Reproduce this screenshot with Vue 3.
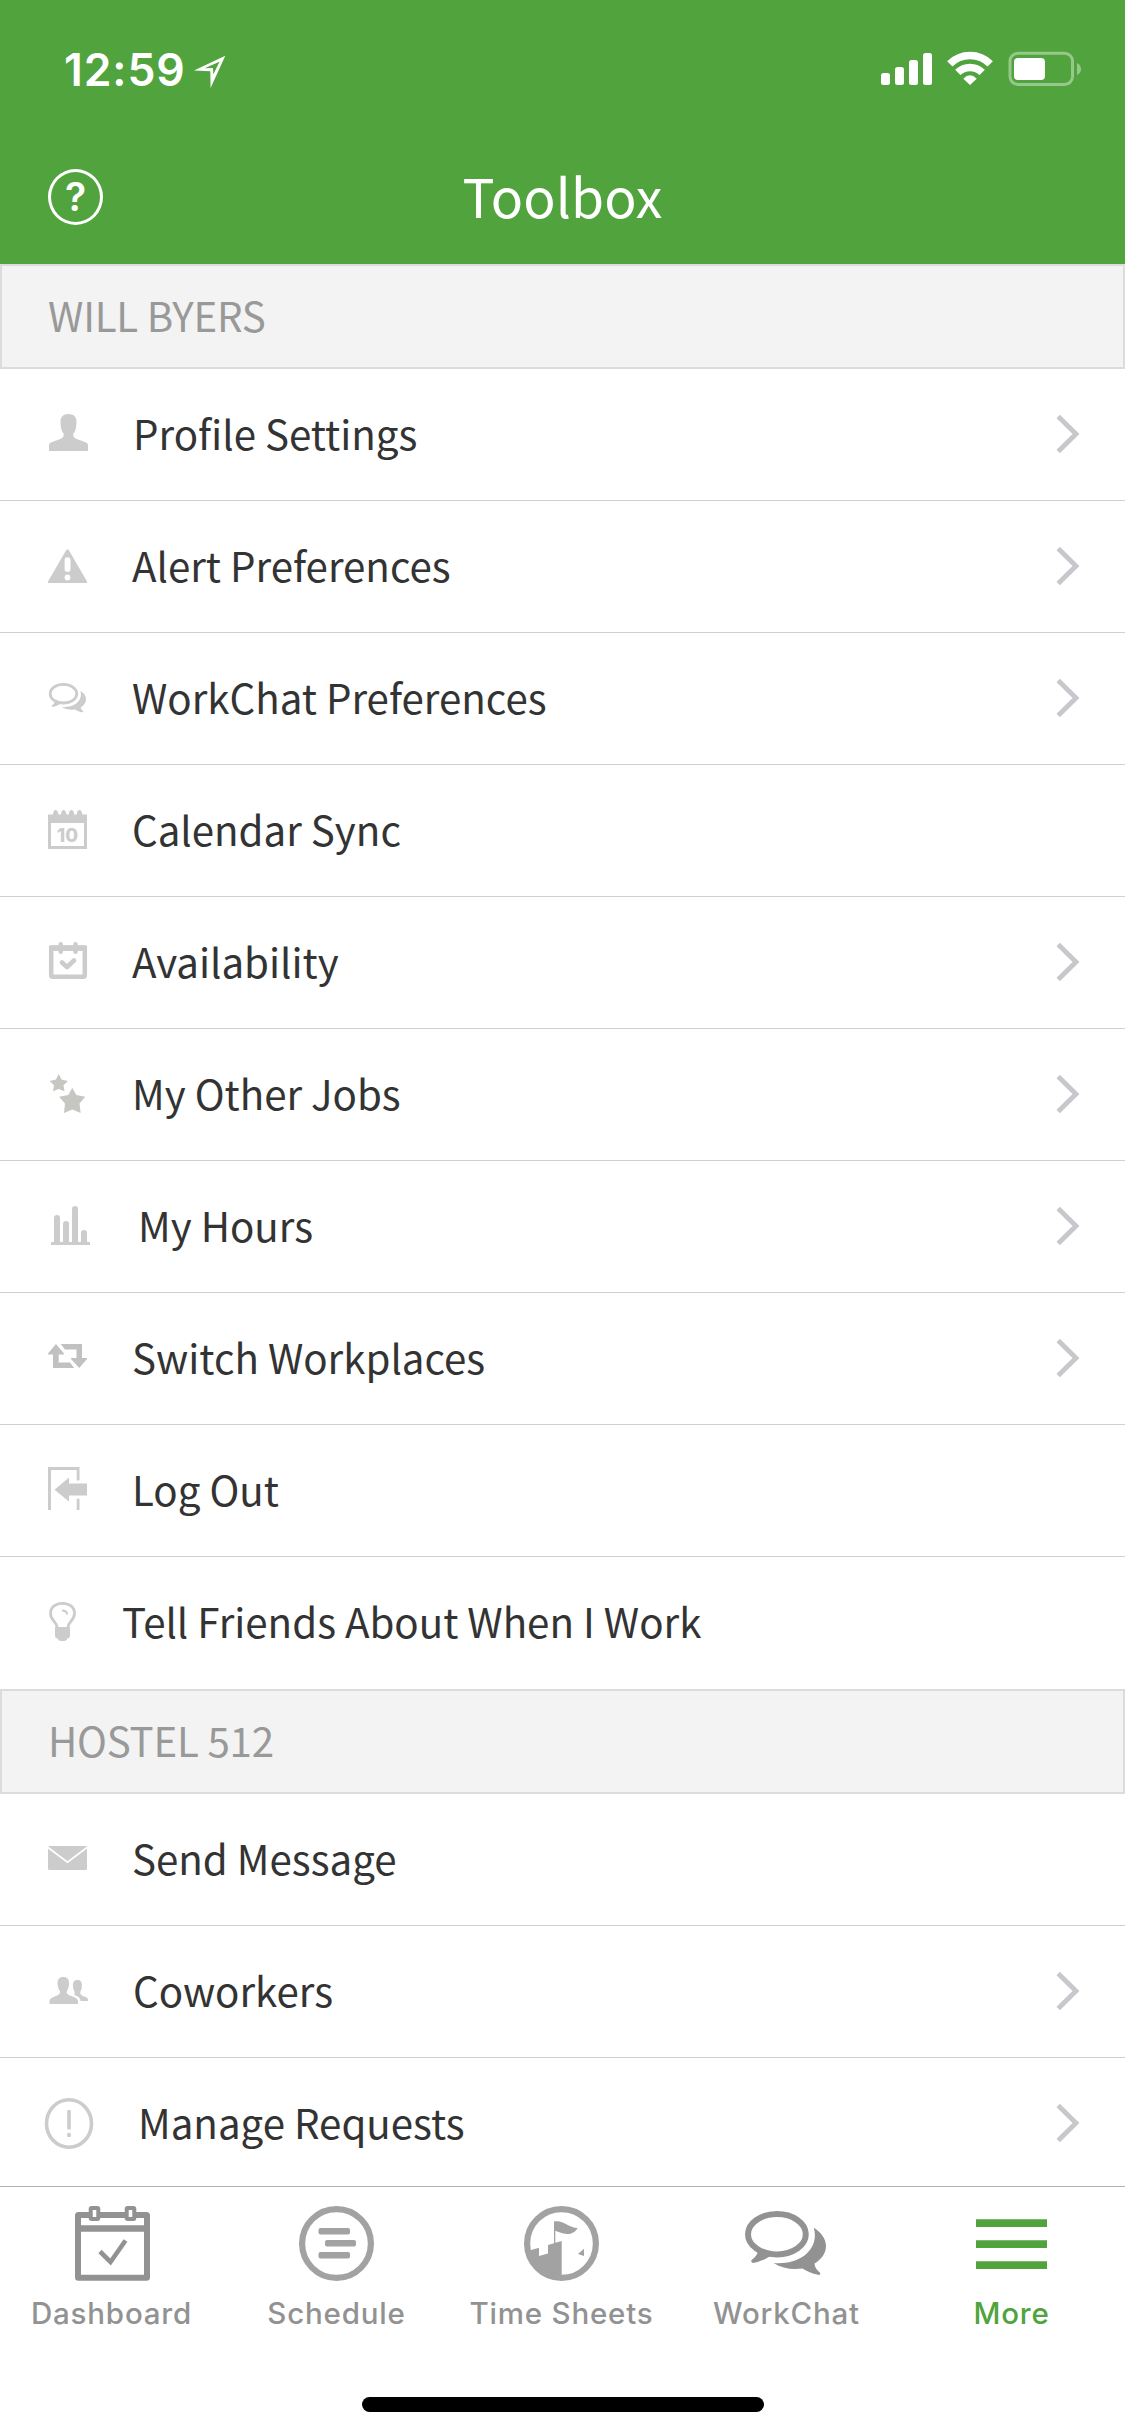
<script setup>
const sections = [
  {
    title: 'WILL BYERS',
    rows: [
      { icon: 'person', label: 'Profile Settings', indent: 133, more: true },
      { icon: 'alert', label: 'Alert Preferences', indent: 132, more: true },
      { icon: 'chat', label: 'WorkChat Preferences', indent: 132, more: true },
      { icon: 'calendar', label: 'Calendar Sync', indent: 132, more: false },
      { icon: 'availability', label: 'Availability', indent: 132, more: true },
      { icon: 'stars', label: 'My Other Jobs', indent: 132, more: true },
      { icon: 'bars', label: 'My Hours', indent: 138, more: true },
      { icon: 'switch', label: 'Switch Workplaces', indent: 132, more: true },
      { icon: 'logout', label: 'Log Out', indent: 132, more: false },
      { icon: 'bulb', label: 'Tell Friends About When I Work', indent: 122, more: false },
    ],
  },
  {
    title: 'HOSTEL 512',
    rows: [
      { icon: 'mail', label: 'Send Message', indent: 132, more: false },
      { icon: 'coworkers', label: 'Coworkers', indent: 133, more: true },
      { icon: 'requests', label: 'Manage Requests', indent: 138, more: true },
    ],
  },
]

const tabs = [
  { id: 'dashboard', label: 'Dashboard' },
  { id: 'schedule', label: 'Schedule' },
  { id: 'timesheets', label: 'Time Sheets' },
  { id: 'workchat', label: 'WorkChat' },
  { id: 'more', label: 'More', active: true },
]
</script>

<template>
  <div class="screen">
    <svg class="defs" width="0" height="0" aria-hidden="true">
      <symbol id="bubbles" viewBox="0 0 81 64">
        <ellipse cx="31.9" cy="23.2" rx="28.9" ry="20.2" fill="none" stroke="currentColor" stroke-width="6" />
        <path d="M12 39C13.4 41.500 12.500 44.500 6.500 49.200Q5.500 51.500 8 52Q17 50.500 24.500 45.500L19.500 38Z" fill="currentColor" />
        <path d="M68.800 16.700C76 21 81 28 81 35C81 42 76.500 48.500 69.500 52.500C69.800 57 72.500 59.500 75.300 62Q75.500 64.300 73 63.800C67 62.500 62 60.500 57.500 57.500C47 58.800 37 57.500 28.500 52C40 53 51.500 50.500 59.500 44.500C68 38 72 28 68.800 16.700Z" fill="currentColor" />
      </symbol>
    </svg>

    <header class="top">
      <div class="status">
        <span class="time">12:59</span>
        <svg class="locate" width="32" height="34" viewBox="194 55 32 34">
          <path fill="#fff" fill-rule="evenodd" d="M194 70.500L225.300 55.800L210.600 88L210.300 71.200ZM204.500 68.300L213 68L213.300 74.500L219.500 61.800Z" />
        </svg>
        <svg class="meters" width="204" height="40" viewBox="880 50 204 40">
          <g fill="#fff">
            <rect x="881" y="73" width="9" height="12" rx="2.500" />
            <rect x="895" y="67" width="9" height="18" rx="2.500" />
            <rect x="909" y="60" width="9" height="25" rx="2.500" />
            <rect x="923" y="53" width="9" height="32" rx="2.500" />
            <path d="M970 85L963.300 78.700Q970 72 976.700 78.700Z" />
            <rect x="1014" y="58" width="31" height="22" rx="4" />
          </g>
          <g fill="none" stroke="#fff" stroke-width="7.500">
            <path d="M949.800 63.800A28.500 28.500 0 0 1 990.200 63.800" />
            <path d="M957.800 72.400A17.500 17.500 0 0 1 982.200 72.400" />
          </g>
          <g opacity=".4">
            <rect x="1010" y="53.200" width="62.500" height="31.300" rx="8" fill="none" stroke="#fff" stroke-width="3" />
            <path d="M1077 63Q1081 65 1081 69T1077 75Z" fill="#fff" />
          </g>
        </svg>
      </div>
      <div class="nav">
        <span class="help">?</span>
        <h1 class="title">Toolbox</h1>
      </div>
    </header>

    <main class="list">
      <section v-for="section in sections" :key="section.title">
        <h2 class="section-title">{{ section.title }}</h2>
        <div v-for="row in section.rows" :key="row.icon" class="row">
          <svg class="icon" :style="{ width: row.indent + 'px' }" height="131" :viewBox="`0 0 ${row.indent} 131`">
            <g v-if="row.icon === 'person'">
              <path d="M68.500 45C74 45 76.800 48 76.500 53.500C76.200 59 75.500 62.500 73.300 64.800C73 68 74.500 69.300 78 70.600C83 72.500 88 73.500 88 76V82H49V76C49 73.500 54 72.500 59 70.600C62.500 69.300 64 68 63.700 64.800C61.500 62.500 60.800 59 60.500 53.500C60.200 48 63 45 68.500 45Z" />
            </g>
            <g v-else-if="row.icon === 'alert'">
              <path d="M66 49.500Q67.500 47 69 49.500L87 80.500V82H48V80.500Z" />
              <rect x="64.600" y="56.300" width="5.900" height="14.500" rx="2.900" fill="#fff" />
              <circle cx="67.500" cy="76.500" r="2.900" fill="#fff" />
            </g>
            <use v-else-if="row.icon === 'chat'" href="#bubbles" x="48.700" y="50" width="37.400" height="29.500" />
            <g v-else-if="row.icon === 'calendar'">
              <path fill-rule="evenodd" d="M48 49.500H53Q53.200 45 55.500 45T58.500 49.500H61Q61.200 45 63.500 45T66.500 49.500H68.800Q69 45 71.400 45T74.300 49.500H76.800Q77 45 79.400 45T82.300 49.500H87V84H48ZM51 58V81H84V58Z" />
              <text class="day" x="67.600" y="76.700" text-anchor="middle">10</text>
            </g>
            <g v-else-if="row.icon === 'availability'">
              <rect x="51.200" y="50.500" width="33.600" height="29.300" rx="1.500" fill="none" stroke="#ccc" stroke-width="4.500" />
              <path d="M49 48.500H87V54H49Z" />
              <path d="M60.700 47.200V54.700M75.500 47.200V54.700" class="thick" />
              <path d="M62 65.500L67 70L74 63.500" class="thick" />
            </g>
            <g v-else-if="row.icon === 'stars'" fill="#c7c7c2">
              <path d="M58.700 45L61.500 50.500L68 52L63.500 56.300L64.500 62.300L58.700 60L53 62.300L54 56.300L49.700 52L56 50.500Z" />
              <path d="M72.300 58.700L76.300 66L85.300 67.800L79.500 74.500L80.700 84L72.300 80.500L64 84L65 74.500L59 67.800L68.300 66Z" />
            </g>
            <path v-else-if="row.icon === 'bars'" d="M51 81H54V57Q54 54 57 54T60 57V81H63V63Q63 60 66 60T69 63V81H72V48Q72 45 75 45T78 48V81H81V72Q81 69 84 69T87 72V81H90V84H51Z" />
            <g v-else-if="row.icon === 'switch'" fill="#c1c1c1">
              <path d="M56 51L64 60.500V61.500H58.700V69.500H70L74.200 75H53V61.500H48V60.500Z" />
              <path d="M60.700 51H82V65H87V66L79.200 75L71 66V65H76.500V56.500H65Z" />
            </g>
            <path v-else-if="row.icon === 'logout'" d="M48 42H79.500V55.500H76.700V45H51V85H48ZM76.700 73.700H79.500V85H76.700ZM54.500 64.700L69 52.500V58.500H87V70.500H69V76.500Z" />
            <g v-else-if="row.icon === 'bulb'">
              <path d="M57 70C57 65 50.500 63.500 50.500 56.500C50.500 50 56 46.300 62.500 46.300S74.500 50 74.500 56.500C74.500 63.500 68 65 68 70" fill="none" stroke="#ccc" stroke-width="2.800" />
              <path d="M62 53.500Q67 53.500 67.200 57.500" fill="none" stroke="#ccc" stroke-width="2" />
              <path d="M55 70H70V79Q70 81 67.500 81.500Q66.500 84 64 84H61Q58.500 84 57.500 81.500Q55 81 55 79Z" />
            </g>
            <g v-else-if="row.icon === 'mail'">
              <rect x="48" y="52" width="39" height="24" rx="1.500" />
              <path d="M48 53.500L67.500 68.200L87 53.500" fill="none" stroke="#fff" stroke-width="1.800" />
            </g>
            <g v-else-if="row.icon === 'coworkers'">
              <path d="M63.200 51C67.500 51 69.200 53.500 69 57.500C68.800 61 68.200 63.500 66.700 65.200C66.500 67.700 67.700 68.800 70.500 69.800C75 71.500 78 72.500 78 75.500V78H49.500V75.500C49.500 72.500 52.500 71.500 56.500 69.800C59 68.800 60.200 67.700 60 65.200C58.500 63.500 57.800 61 57.600 57.500C57.400 53.500 59 51 63.200 51Z" />
              <path d="M77.500 54C80.700 54 82 56 81.900 59.500C81.800 62.500 81.300 64.200 80.200 65.800C80 68 81 69.300 83.500 70.200C86.500 71.200 88 71.800 88 73.500V75H80.500C80.500 71.500 77 70 74 68.800Q75.300 67.500 74.500 65.500C73.300 63.500 73 62 72.900 59.500C72.800 56 74.300 54 77.500 54Z" />
            </g>
            <g v-else>
              <ellipse cx="69" cy="65.500" rx="22.500" ry="23.700" fill="none" stroke="#ccc" stroke-width="3.600" />
              <rect x="67.200" y="52" width="3.600" height="19.500" rx="1" />
              <rect x="67.200" y="75" width="3.600" height="4" rx="1" />
            </g>
          </svg>
          <span class="label">{{ row.label }}</span>
          <svg v-if="row.more" class="chevron" width="26" height="42" viewBox="0 0 26 42">
            <path d="M3.200 3.500L21 21L3.200 38.500" fill="none" stroke="#c7c7cc" stroke-width="4.800" />
          </svg>
        </div>
      </section>
    </main>

    <nav class="tabs">
      <div class="tab-row">
        <div v-for="tab in tabs" :key="tab.id" class="tab" :class="{ active: tab.active }">
          <svg width="225" height="102" viewBox="0 0 225 102">
            <g v-if="tab.id === 'dashboard'" fill="none" stroke="#929292">
              <rect x="78" y="28" width="69" height="62.700" rx=".5" stroke-width="6" />
              <path d="M78 41.500H147" stroke-width="6.300" />
              <g fill="#fff" stroke-width="4">
                <rect x="90.700" y="21" width="7.600" height="11" rx="1" />
                <rect x="126.700" y="21" width="7.600" height="11" rx="1" />
              </g>
              <path d="M100 64.500L110.500 75L125.500 53.500" stroke-width="4.600" />
            </g>
            <g v-else-if="tab.id === 'schedule'" fill="#a2a2a2">
              <circle cx="111.500" cy="56.500" r="34.400" fill="none" stroke="#a2a2a2" stroke-width="6.200" />
              <rect x="93.500" y="41" width="31.500" height="6.500" rx="2" />
              <rect x="100" y="53" width="31" height="6.500" rx="2" />
              <rect x="93.500" y="65" width="31.500" height="6.500" rx="2" />
            </g>
            <g v-else-if="tab.id === 'timesheets'" fill="#a2a2a2">
              <circle cx="111.500" cy="56.500" r="34.400" fill="none" stroke="#a2a2a2" stroke-width="6.200" />
              <path d="M78.500 63.700L89 60.700V69L98 66.500V58L104 56.200V34.500C113 32.500 118 40.500 127.700 41C123 49 115 48 105.300 43.800V55.800L111.700 54V91H105C90 90 78 78 78.500 63.700Z" />
              <path d="M134 61.700V69L128 67Z" />
            </g>
            <g v-else-if="tab.id === 'workchat'" class="chat-tab">
              <use href="#bubbles" x="70" y="24" width="81" height="64" />
            </g>
            <path v-else fill="#51a33d" d="M76 32.300H147V40H76ZM76 53.300H147V61H76ZM76 74.300H147V82H76Z" />
          </svg>
          <span class="tab-label">{{ tab.label }}</span>
        </div>
      </div>
      <div class="home"></div>
    </nav>
  </div>
</template>

<style>
body {
  margin: 0;
  background: #fff;
}
</style>

<style scoped>
.screen {
  display: flex;
  flex-direction: column;
  width: 1125px;
  height: 2436px;
  overflow: hidden;
  background: #fff;
  font-family: "Noto Sans CJK SC", "Noto Sans", sans-serif;
}
.defs {
  position: absolute;
}
.top {
  flex: none;
  height: 264px;
  background: #51a33d;
  color: #fff;
}
.status {
  display: flex;
  height: 132px;
  box-sizing: border-box;
  padding: 50px 41px 0 64px;
}
.time {
  width: 130px;
  font: 600 44.500px/40px Inter, sans-serif;
  letter-spacing: 0.900px;
}
.locate {
  margin-top: 5px;
}
.meters {
  margin-left: auto;
}
.nav {
  display: grid;
  grid-template-columns: 1fr auto 1fr;
  align-items: center;
  height: 130px;
  padding: 0 48px;
}
.help {
  display: flex;
  align-items: center;
  justify-content: center;
  box-sizing: border-box;
  width: 55px;
  height: 56px;
  border: 3px solid #fff;
  border-radius: 50%;
  font: 600 39px/50px Inter, sans-serif;
}
.title {
  margin: 0;
  padding-bottom: 4px;
  font-size: 53.500px;
  font-weight: 400;
  line-height: 126px;
  letter-spacing: 0.100px;
}
.list {
  height: 1922px;
  overflow: hidden;
}
.section-title {
  box-sizing: border-box;
  height: 105px;
  margin: 0;
  padding-left: 46px;
  border: 2px solid #dcdcdc;
  background: #f3f3f3;
  color: #999;
  font-size: 40.300px;
  font-weight: 400;
  line-height: 97px;
  letter-spacing: -0.250px;
}
.row {
  display: flex;
  align-items: center;
  box-sizing: border-box;
  height: 132px;
  border-bottom: 1px solid #d0d0d0;
}
.row:last-child {
  border-bottom-color: transparent;
}
.icon {
  flex: none;
  fill: #ccc;
  color: #ccc;
}
.thick {
  fill: none;
  stroke: #ccc;
  stroke-width: 4.500px;
  stroke-linecap: round;
  stroke-linejoin: round;
}
.day {
  font: 800 18.500px Inter, sans-serif;
}
.label {
  color: #333;
  font-size: 40.250px;
  line-height: 127px;
  padding-bottom: 4px;
  white-space: nowrap;
}
.chevron {
  margin: 0 44px 2px auto;
}
.tabs {
  flex: 1;
  border-top: 1px solid #b2b2b2;
  background: #fff;
}
.tab-row {
  display: flex;
  height: 210px;
}
.tab {
  display: flex;
  flex-direction: column;
  align-items: center;
  width: 225px;
  color: #929292;
}
.tab.active {
  color: #51a33d;
}
.chat-tab {
  color: #929292;
}
.tab-label {
  padding-right: 2px;
  font: 450 29.500px/48px Inter, sans-serif;
  letter-spacing: 0.800px;
  white-space: nowrap;
}
.home {
  width: 402px;
  height: 15px;
  margin: 0 auto;
  border-radius: 8px;
  background: #000;
}
</style>
